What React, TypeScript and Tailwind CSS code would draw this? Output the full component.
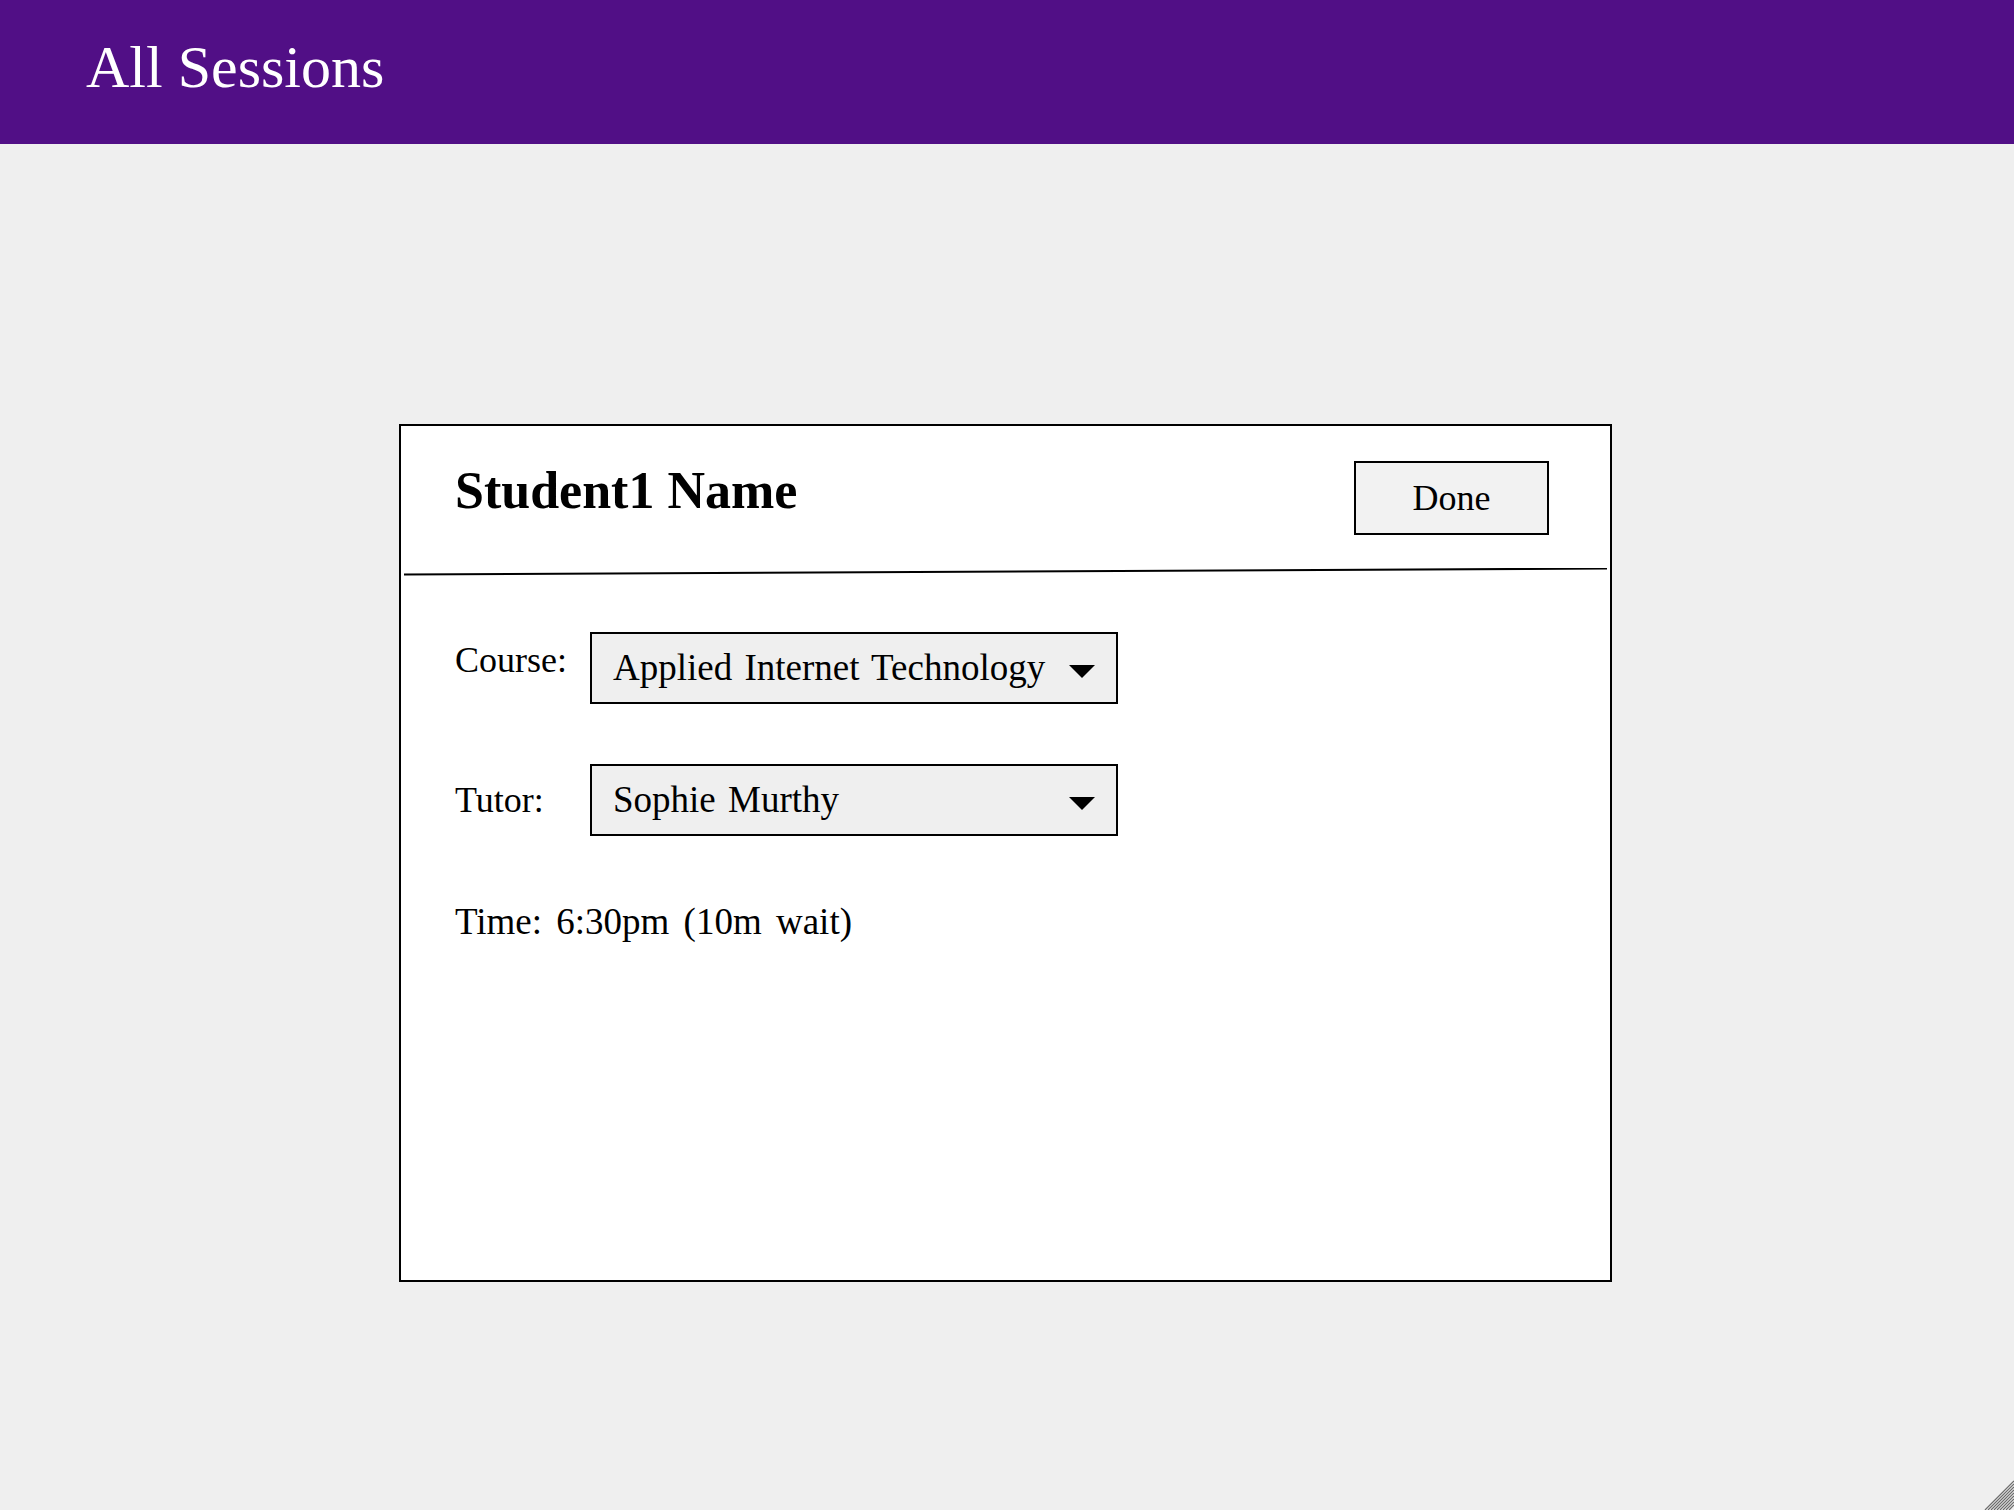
import React from 'react';

const serif = { fontFamily: '"Liberation Serif", "Times New Roman", serif' };

const Caret: React.FC = () => (
  <svg width="26" height="13" viewBox="0 0 26 13" className="shrink-0 mt-[6px]">
    <path d="M0 0 L26 0 L13 13 Z" fill="#000" />
  </svg>
);

const SelectBox: React.FC<{ value: string }> = ({ value }) => (
  <div className="w-[528px] h-[72px] border-2 border-black bg-[#efefef] flex items-center justify-between pl-[21px] pr-[21px]">
    <span className="text-[37px] leading-[44px] text-black whitespace-nowrap [word-spacing:3px]">{value}</span>
    <Caret />
  </div>
);

export default function App() {
  return (
    <div className="relative w-full min-h-[1510px] bg-[#efefef]" style={serif}>
      <header className="h-[144px] bg-[#510f86] pl-[86px] pt-[31px]">
        <h1 className="text-[60px] leading-[72px] text-white">All Sessions</h1>
      </header>

      <main className="flex justify-center pt-[280px] pr-[3px]">
        <div className="w-[1213px] h-[858px] border-2 border-black bg-white flex flex-col">
          <div className="flex items-start justify-between pl-[54px] pr-[61px] pt-[35px] pb-[33px]">
            <h2 className="text-[52px] leading-[60px] font-bold text-black">Student1 Name</h2>
            <button className="w-[195px] h-[74px] border-2 border-black bg-[#f2f2f2] text-[36px] leading-[44px] text-black">
              Done
            </button>
          </div>

          <svg className="mx-[3px] h-[8px] w-[1203px]" viewBox="0 0 1200 8" preserveAspectRatio="none">
            <line x1="0" y1="6.5" x2="1200" y2="0.5" stroke="#000" strokeWidth="2" vectorEffect="non-scaling-stroke" />
          </svg>

          <div className="flex flex-col pl-[54px] pt-[56px]">
            <div className="flex items-start">
              <span className="w-[135px] pt-[6px] text-[36px] leading-[44px] text-black">Course:</span>
              <SelectBox value="Applied Internet Technology" />
            </div>

            <div className="flex items-center mt-[60px]">
              <span className="w-[135px] text-[36px] leading-[44px] text-black">Tutor:</span>
              <SelectBox value="Sophie Murthy" />
            </div>

            <p className="mt-[64px] text-[37px] leading-[44px] text-black [word-spacing:5px]">Time: 6:30pm (10m wait)</p>
          </div>
        </div>
      </main>

      <svg className="absolute right-0 bottom-0" width="30" height="30" viewBox="0 0 30 30">
        {[1, 4, 7, 10, 13, 16, 19, 22, 25].map(k => (
          <line key={k} x1={k} y1="30" x2="30" y2={k} stroke="#6b6b6b" strokeWidth="1.2" />
        ))}
      </svg>
    </div>
  );
}
